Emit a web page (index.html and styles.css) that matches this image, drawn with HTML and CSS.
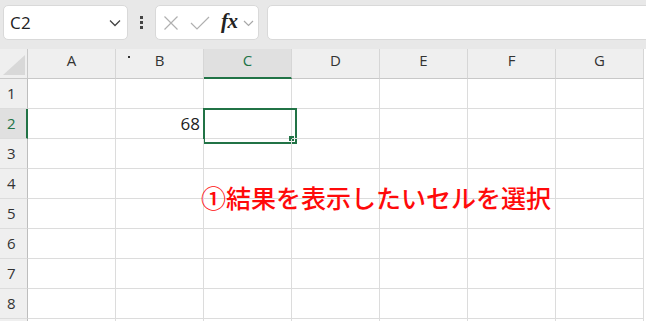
FILE: index.html
```html
<!DOCTYPE html>
<html lang="ja">
<head>
<meta charset="utf-8">
<link rel="stylesheet" href="styles.css">
</head>
<body>
<div class="app">
  <div class="toolbar">
    <div class="namebox">
      <span class="ref">C2</span>
      <svg class="chev" width="12" height="8" viewBox="0 0 12 8"><path d="M1 1.5 L6 6.5 L11 1.5" fill="none" stroke="#444" stroke-width="1.3"/></svg>
    </div>
    <div class="dots"><i></i><i></i><i></i></div>
    <div class="fxbox">
      <svg class="ico" width="16" height="16" viewBox="0 0 16 16"><path d="M1.5 1.5 L14.5 14.5 M14.5 1.5 L1.5 14.5" stroke="#b0b0b0" stroke-width="1.2" fill="none"/></svg>
      <svg class="ico" width="20" height="14" viewBox="0 0 20 14"><path d="M1 7 L7 13 L19 1" stroke="#b0b0b0" stroke-width="1.2" fill="none"/></svg>
      <span class="fx">fx</span>
      <svg class="chev2" width="11" height="7" viewBox="0 0 11 7"><path d="M1 1 L5.5 5.5 L10 1" fill="none" stroke="#a8a8a8" stroke-width="1.2"/></svg>
    </div>
    <div class="formula"></div>
  </div>
  <div class="sheet">
    <div class="row head">
      <div class="corner"><span class="tri"></span></div>
      <div class="ch">A</div>
      <div class="ch">B<span class="speck"></span></div>
      <div class="ch sel">C</div>
      <div class="ch">D</div>
      <div class="ch">E</div>
      <div class="ch">F</div>
      <div class="ch">G</div>
    </div>
    <div class="row"><div class="rh">1</div><div class="c"></div><div class="c"></div><div class="c"></div><div class="c"></div><div class="c"></div><div class="c"></div><div class="c"></div></div>
    <div class="row"><div class="rh sel">2</div><div class="c"></div><div class="c num">68</div><div class="c active"><span class="handle"></span></div><div class="c"></div><div class="c"></div><div class="c"></div><div class="c"></div></div>
    <div class="row"><div class="rh">3</div><div class="c"></div><div class="c"></div><div class="c"></div><div class="c"></div><div class="c"></div><div class="c"></div><div class="c"></div></div>
    <div class="row"><div class="rh">4</div><div class="c"></div><div class="c"></div><div class="c"></div><div class="c"></div><div class="c"></div><div class="c"></div><div class="c"></div></div>
    <div class="row"><div class="rh">5</div><div class="c"></div><div class="c"></div><div class="c"></div><div class="c"></div><div class="c"></div><div class="c"></div><div class="c"></div></div>
    <div class="row"><div class="rh">6</div><div class="c"></div><div class="c"></div><div class="c"></div><div class="c"></div><div class="c"></div><div class="c"></div><div class="c"></div></div>
    <div class="row"><div class="rh">7</div><div class="c"></div><div class="c"></div><div class="c"></div><div class="c"></div><div class="c"></div><div class="c"></div><div class="c"></div></div>
    <div class="row"><div class="rh">8</div><div class="c"></div><div class="c"></div><div class="c"></div><div class="c"></div><div class="c"></div><div class="c"></div><div class="c"></div></div>
    <div class="row"><div class="rh"></div><div class="c"></div><div class="c"></div><div class="c"></div><div class="c"></div><div class="c"></div><div class="c"></div><div class="c"></div></div>
    <div class="note">①結果を表示したいセルを選択</div>
  </div>
</div>
</body>
</html>
```

FILE: styles.css
```css
* { box-sizing: border-box; }
html, body { margin: 0; padding: 0; }
body {
  width: 646px;
  height: 321px;
  overflow: hidden;
  background: #ffffff;
  font-family: "Open Sans", "Noto Sans", "Liberation Sans", sans-serif;
  color: #333;
}
.app { width: 646px; height: 321px; overflow: hidden; }

.toolbar {
  height: 49px;
  background: #e8e8e8;
  display: flex;
  align-items: flex-start;
  padding: 5px 0 0 3px;
}
.namebox {
  width: 125px;
  height: 35px;
  background: #fff;
  border: 1px solid #d9d9d9;
  border-radius: 5px;
  display: flex;
  align-items: center;
  justify-content: space-between;
  padding: 0 6px 0 6px;
}
.ref { font-size: 17px; color: #222; letter-spacing: 0.2px; }
.chev { margin-top: 1px; }
.dots {
  width: 27px;
  height: 35px;
  display: flex;
  flex-direction: column;
  align-items: center;
  justify-content: center;
  gap: 2px;
}
.dots i { display: block; width: 3px; height: 3px; background: #444; }
.fxbox {
  width: 104px;
  height: 35px;
  background: #fff;
  border: 1px solid #d9d9d9;
  border-radius: 5px;
  display: flex;
  align-items: center;
  padding-left: 7px;
}
.fxbox .ico:nth-child(1) { margin-right: 11px; }
.fxbox .ico:nth-child(2) { margin-right: 11px; }
.fx {
  font-family: "Liberation Serif", "DejaVu Serif", serif;
  font-style: italic;
  font-weight: bold;
  font-size: 21px;
  color: #222;
  letter-spacing: -0.5px;
  margin-top: -3px;
}
.chev2 { margin-left: 5px; margin-top: 1px; }
.formula {
  flex: 1;
  height: 35px;
  margin-left: 8px;
  margin-right: -8px;
  background: #fff;
  border: 1px solid #d9d9d9;
  border-radius: 5px 0 0 5px;
}

.sheet { position: relative; }
.row { display: flex; height: 30px; }
.row > div { flex: none; height: 30px; }
.corner {
  width: 28px;
  background: #efefef;
  border-right: 1px solid #c8c8c8;
  border-bottom: 1px solid #c8c8c8;
  position: relative;
}
.tri {
  position: absolute;
  left: 3px;
  top: 6px;
  width: 0;
  height: 0;
  border-left: 22px solid transparent;
  border-bottom: 20px solid #d8d8d8;
}
.ch {
  width: 88px;
  background: #efefef;
  border-right: 1px solid #d6d6d6;
  border-bottom: 1px solid #c8c8c8;
  text-align: center;
  font-size: 15px;
  line-height: 23px;
  color: #333;
  position: relative;
}
.ch.sel {
  background: #e0e0e0;
  color: #217346;
  border-bottom: 2px solid #217346;
}
.speck {
  position: absolute;
  left: 12px;
  top: 7px;
  width: 2px;
  height: 2px;
  background: #333;
}
.rh {
  width: 28px;
  background: #efefef;
  border-right: 1px solid #bdbdbd;
  border-bottom: 1px solid #dcdcdc;
  font-size: 15px;
  line-height: 29px;
  padding-left: 7px;
  color: #333;
}
.rh.sel {
  background: #e0e0e0;
  color: #217346;
  border-right: 2px solid #217346;
}
.c {
  width: 88px;
  border-right: 1px solid #dcdcdc;
  border-bottom: 1px solid #dcdcdc;
  position: relative;
}
.num {
  text-align: right;
  padding-right: 3px;
  font-size: 17px;
  line-height: 30px;
  color: #222;
}
.active::before {
  content: "";
  position: absolute;
  left: -1px;
  top: -1px;
  width: 90px;
  height: 32px;
  border: 2px solid #217346;
}
.handle {
  position: absolute;
  right: -3px;
  bottom: -3px;
  width: 5px;
  height: 5px;
  background: #217346;
}
.note {
  position: absolute;
  left: 201px;
  top: 133px;
  font-family: "Noto Sans CJK JP", sans-serif;
  font-weight: 500;
  font-size: 25px;
  line-height: 30px;
  color: #ff0a0a;
  white-space: nowrap;
  letter-spacing: 0;
}
```
